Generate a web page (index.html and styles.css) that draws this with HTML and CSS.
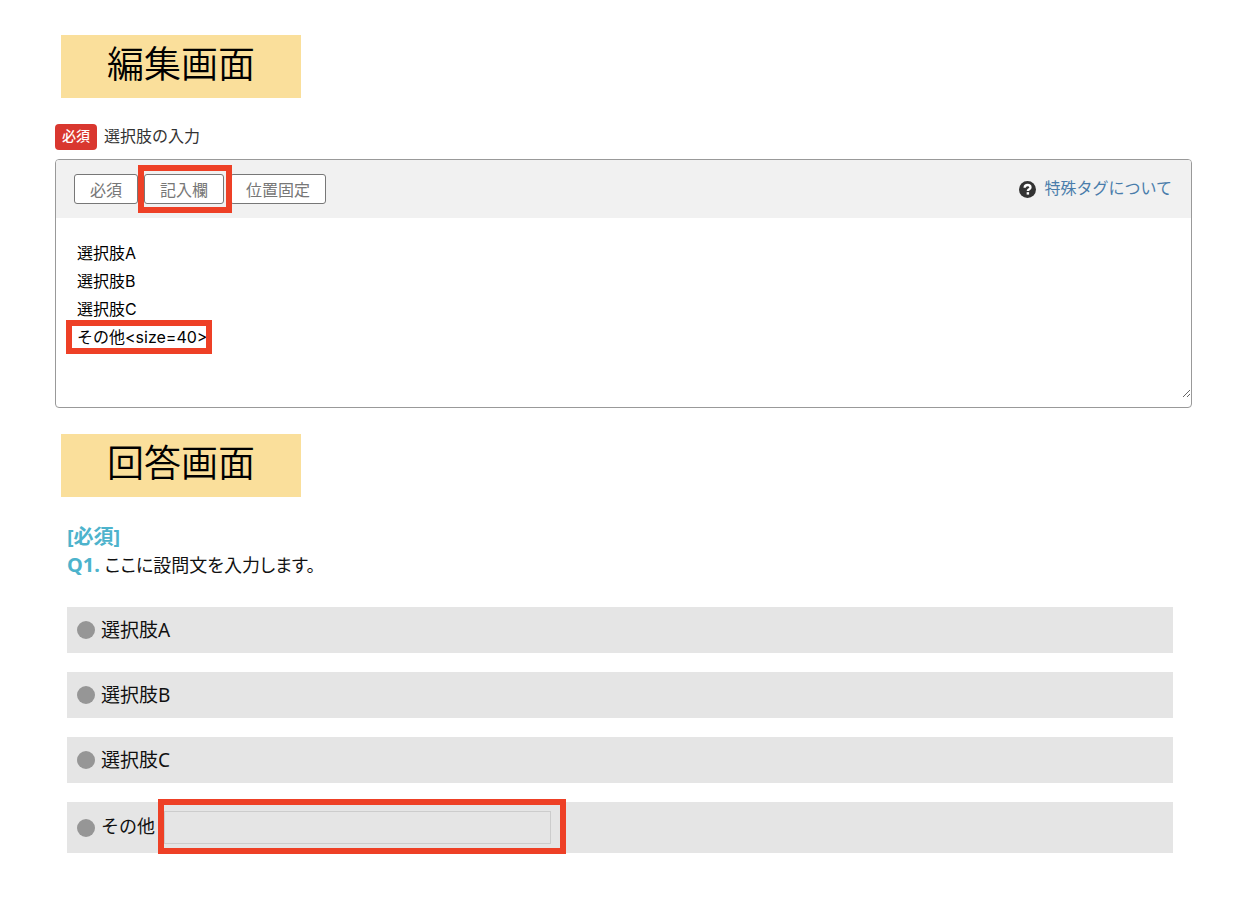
FILE: index.html
```
<!DOCTYPE html>
<html lang="ja">
<head>
    <meta charset="UTF-8">
    <meta name="viewport" content="width=device-width, initial-scale=1.0">
    <title>選択肢の入力</title>
    <link rel="stylesheet" href="styles.css">
</head>
<body>
    <div class="page">
        <h2 class="caption">編集画面</h2>

        <div class="field-label">
            <span class="badge">必須</span>
            <label for="choices">選択肢の入力</label>
        </div>
        <div class="editor">
            <div class="toolbar">
                <button type="button">必須</button>
                <div class="marked">
                    <button type="button">記入欄</button>
                    <span class="mark mark-button"></span>
                </div>
                <button type="button">位置固定</button>
                <a href="#" class="help">
                    <svg width="17" height="17" viewBox="0 0 16 16">
                        <circle cx="8" cy="8" r="8" fill="#333"/>
                        <path d="M5.3 6.3C5.4 4.5 6.6 3.8 8.1 3.8c1.5 0 2.7.8 2.7 2.2 0 1.8-2.5 1.7-2.5 3.5" fill="none" stroke="#fff" stroke-width="2.2"/>
                        <rect x="7.2" y="10.5" width="2.3" height="2.3" fill="#fff"/>
                    </svg>
                    <span>特殊タグについて</span>
                </a>
            </div>
            <div class="marked">
                <textarea id="choices">選択肢A
選択肢B
選択肢C
その他&lt;size=40&gt;</textarea>
                <span class="mark mark-line"></span>
            </div>
        </div>

        <h2 class="caption">回答画面</h2>

        <div class="question">
            <p class="required">[必須]</p>
            <p><b>Q1.</b> <span class="question-text">ここに設問文を入力します。</span></p>
            <div class="answers">
                <label class="answer"><input type="radio" name="q1"> 選択肢A</label>
                <label class="answer"><input type="radio" name="q1"> 選択肢B</label>
                <label class="answer"><input type="radio" name="q1"> 選択肢C</label>
                <div class="answer answer-other">
                    <input type="radio" name="q1" id="other">
                    <label for="other">その他</label>
                    <div class="marked">
                        <input type="text" class="other-text" aria-label="その他">
                        <span class="mark mark-input"></span>
                    </div>
                </div>
            </div>
        </div>
    </div>
</body>
</html>
```
FILE: styles.css
```
* {
    box-sizing: border-box;
}
body {
    margin: 0;
    background: #fff;
    color: #333;
    font-family: Inter, "Noto Sans CJK JP", sans-serif;
    font-size: 16px;
}
.page {
    padding: 35px 52px 40px 55px;
}
.caption {
    width: 240px;
    height: 63px;
    margin: 0 0 26px 6px;
    background: #fadf9b;
    color: #000;
    font-family: "Noto Sans CJK JP DemiLight", "Noto Sans CJK JP", sans-serif;
    font-size: 37px;
    font-weight: 300;
    line-height: 54px;
    text-align: center;
}
.field-label {
    display: flex;
    align-items: center;
    gap: 7px;
    margin-bottom: 9px;
    line-height: 24px;
}
.badge {
    padding: 0 7px 2px;
    border-radius: 4px;
    background: #d9372f;
    color: #fff;
    font-size: 14px;
    font-weight: 500;
}
.field-label label {
    padding-bottom: 2px;
}
.editor {
    margin-bottom: 26px;
    padding-bottom: 9px;
    border: 1px solid #999;
    border-radius: 4px;
}
.toolbar {
    display: flex;
    align-items: center;
    gap: 6px;
    height: 58px;
    padding: 0 19px 0 18px;
    border-radius: 3px 3px 0 0;
    background: #f1f1f1;
}
.toolbar button {
    display: block;
    height: 30px;
    padding: 0 15px;
    border: 1px solid #777;
    border-radius: 3px;
    background: #fff;
    color: #777;
    font-family: inherit;
    font-size: 16px;
}
.help {
    display: flex;
    align-items: center;
    gap: 8px;
    margin-left: auto;
    color: #4a7dab;
    line-height: 24px;
    text-decoration: none;
}
.help span {
    padding-bottom: 2px;
}
textarea {
    display: block;
    width: 100%;
    height: 180px;
    padding: 21px;
    border: none;
    outline: none;
    background: #fff;
    color: #000;
    font-family: inherit;
    font-size: 16px;
    line-height: 28px;
    resize: vertical;
}

/* red frames */
.marked {
    position: relative;
}
.mark {
    position: absolute;
    z-index: 1;
    border: 6px solid #ee4026;
    pointer-events: none;
}
.mark-button {
    top: -9px;
    left: -6px;
    width: 94px;
    height: 48px;
}
.mark-line {
    top: 102px;
    left: 10px;
    width: 146px;
    height: 34px;
}
.mark-input {
    top: -12px;
    left: -6px;
    width: 408px;
    height: 55px;
}

.question {
    padding: 0 19px 0 12px;
    color: #111;
    font-family: "Noto Sans", "Noto Sans CJK JP", sans-serif;
    font-size: 19px;
    line-height: 28px;
}
.question p {
    margin: 0;
}
.question .required,
.question b {
    color: #4db3cc;
    font-size: 20px;
    font-weight: bold;
}
.question-text {
    font-size: 18px;
    font-feature-settings: "palt";
}
.answers {
    display: flex;
    flex-direction: column;
    gap: 19px;
    margin-top: 28px;
}
.answer {
    display: flex;
    align-items: center;
    gap: 6px;
    min-height: 46px;
    padding: 0 10px;
    background: #e5e5e5;
}
.answer input[type="radio"] {
    appearance: none;
    width: 18px;
    height: 18px;
    margin: 0;
    border-radius: 50%;
    background: #969696;
}
.answer-other {
    min-height: 51px;
}
.answer-other label {
    padding: 0 3px 4px 0;
    font-size: 18px;
}
.other-text {
    display: block;
    width: 387px;
    height: 33px;
    border: 1px solid #ccc;
    background: transparent;
    font-size: 18px;
}
```
